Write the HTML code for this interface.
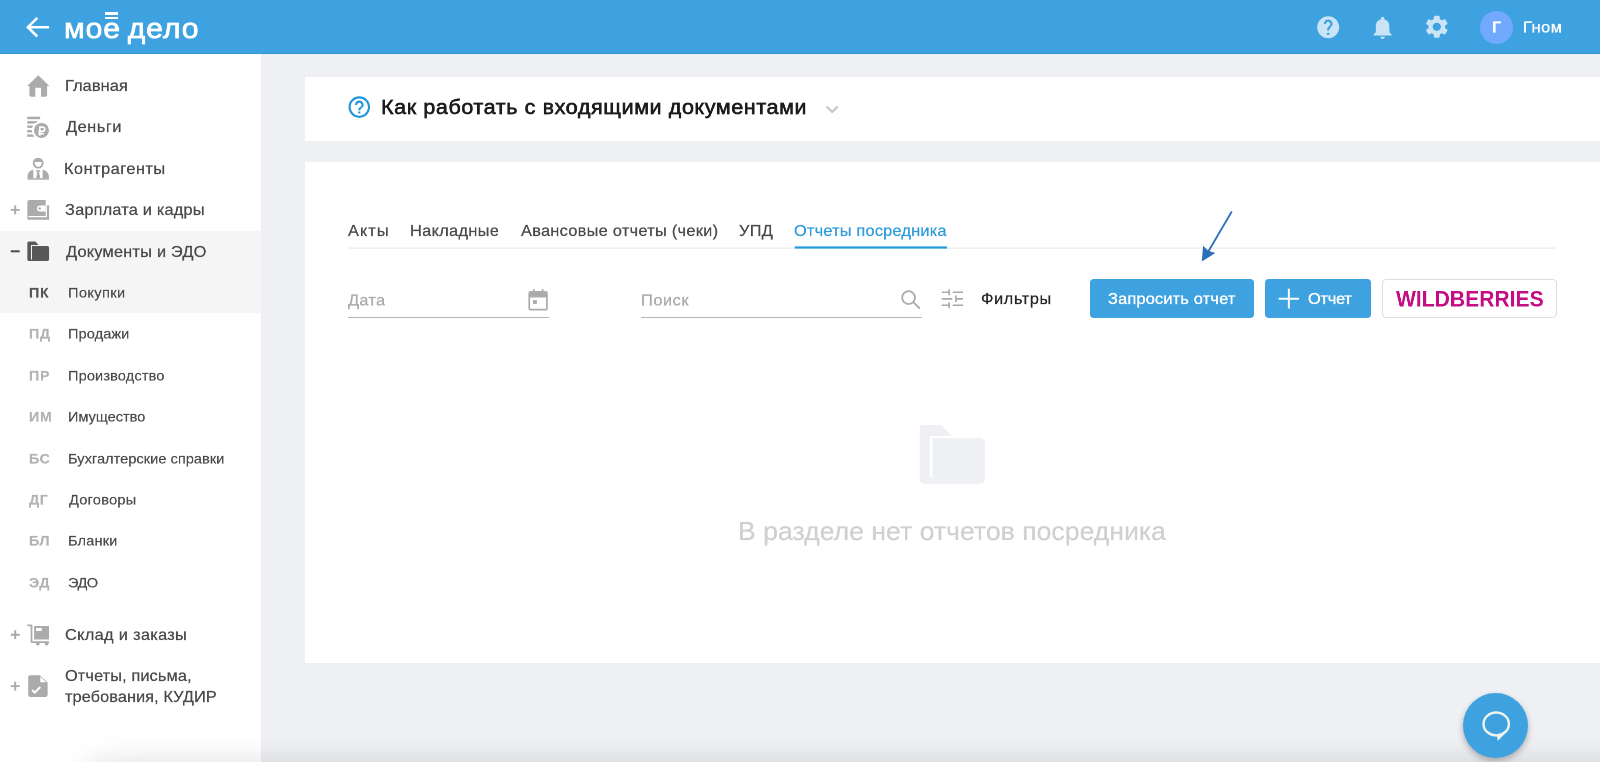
<!DOCTYPE html>
<html lang="ru">
<head>
<meta charset="utf-8">
<title>Моё дело — Покупки — Отчеты посредника</title>
<style>
*{box-sizing:border-box;margin:0;padding:0}
html,body{width:1600px;height:762px;overflow:hidden}
body{position:relative;background:#eef0f4;font-family:"Liberation Sans",sans-serif;color:#4a4a4a}
.abs{position:absolute}
.t{position:absolute;white-space:nowrap;line-height:40px;height:40px;font-size:32px;transform:scale(.51,.5);transform-origin:0 0;will-change:transform;-webkit-text-stroke:0.5px}
header{position:absolute;left:0;top:0;width:1600px;height:54px;background:#3da2df;box-shadow:inset 0 -1px 0 #3198d8}
header .logo{transform:scale(.527,.5);font-size:57px;line-height:80px;height:80px;color:#fff;-webkit-text-stroke:1.6px #fff}
header .user{color:#fff;font-size:32px;-webkit-text-stroke:0.7px #fff}
nav{position:absolute;left:0;top:54px;width:261px;height:708px;background:#fff}
nav .active{position:absolute;left:0;top:177px;width:261px;height:82px;background:#f5f5f5}
nav .m{font-size:32px;line-height:38px;color:#4a4a4a;-webkit-text-stroke:0.5px #4a4a4a}
nav .s{transform:scale(.52,.5);font-size:28px;color:#4a4a4a;-webkit-text-stroke:0.4px #4a4a4a}
nav .ab{font-size:28px;font-weight:bold;color:#b3b3b3;-webkit-text-stroke:0.3px;letter-spacing:1px}
.card{position:absolute;background:#fff}
.tab{font-size:32px;line-height:38px;color:#4a4a4a;-webkit-text-stroke:0.5px}
.btn{position:absolute;top:117px;height:39px;border-radius:4px;background:#3da2df;color:#fff}
.btn .t{font-size:32px;line-height:38px;-webkit-text-stroke:0.7px #fff}
</style>
</head>
<body>

<header>
  <svg class="abs" style="left:24px;top:14px" width="28" height="26" viewBox="24 14 28 26"><path d="M37.3 17.9 L27.9 27.2 L37.3 36.5 M28 27.2 H49.1" fill="none" stroke="#fff" stroke-width="2.6"/></svg>
  <span class="t logo" style="left:64px;top:8px;letter-spacing:1.84px;word-spacing:-4.8px">мое дело</span>
  <div class="abs" style="left:105.3px;top:12.4px;width:13.1px;height:2.3px;background:#fff"></div>
  <div class="abs" style="left:105.3px;top:16.9px;width:13.1px;height:2.3px;background:#fff"></div>
  <svg class="abs" style="left:1314.6px;top:13.9px" width="26.4" height="26.4" viewBox="0 0 24 24"><path fill="#cae4f7" d="M12 2C6.48 2 2 6.48 2 12s4.48 10 10 10 10-4.48 10-10S17.52 2 12 2zm1 17h-2v-2h2v2zm2.07-7.75l-.9.92C13.45 12.9 13 13.5 13 15h-2v-.5c0-1.1.45-2.1 1.17-2.83l1.24-1.26c.37-.36.59-.86.59-1.41 0-1.1-.9-2-2-2s-2 .9-2 2H8c0-2.21 1.79-4 4-4s4 1.79 4 4c0 .88-.36 1.68-.93 2.25z"/></svg>
  <svg class="abs" style="left:1368.6px;top:13.7px" width="27.2" height="27.2" viewBox="0 0 24 24"><path fill="#cae4f7" d="M12 22c1.1 0 2-.9 2-2h-4c0 1.1.89 2 2 2zm6-6v-5c0-3.07-1.64-5.64-4.5-6.32V4c0-.83-.67-1.5-1.5-1.5s-1.5.67-1.5 1.5v.68C7.63 5.36 6 7.92 6 11v5l-2 2v1h16v-1l-2-2z"/></svg>
  <svg class="abs" style="left:1422.8px;top:13.3px" width="27.6" height="27.6" viewBox="0 0 24 24"><path fill="#cae4f7" d="M19.14 12.94c.04-.3.06-.61.06-.94 0-.32-.02-.64-.07-.94l2.03-1.58c.18-.14.23-.41.12-.61l-1.92-3.32c-.12-.22-.37-.29-.59-.22l-2.39.96c-.5-.38-1.03-.7-1.62-.94l-.36-2.54c-.04-.24-.24-.41-.48-.41h-3.84c-.24 0-.43.17-.47.41l-.36 2.54c-.59.24-1.13.57-1.62.94l-2.39-.96c-.22-.08-.47 0-.59.22L2.74 8.870c-.12.21-.08.47.12.61l2.030 1.580c-.05.3-.09.63-.09.94s.02.64.07.94l-2.030 1.580c-.18.14-.23.41-.12.61l1.920 3.320c.12.22.37.29.59.22l2.390-.96c.5.38 1.030.7 1.620.94l.36 2.540c.05.24.24.41.48.41h3.840c.24 0 .44-.17.47-.41l.36-2.540c.59-.24 1.130-.56 1.620-.94l2.390.96c.22.08.47 0 .59-.22l1.920-3.320c.12-.22.07-.47-.12-.61l-2.010-1.580zM12 15.600c-1.980 0-3.600-1.620-3.600-3.600s1.620-3.600 3.600-3.600 3.600 1.620 3.600 3.600-1.620 3.600-3.600 3.600z"/></svg>
  <div class="abs" style="left:1480.2px;top:10.9px;width:32.7px;height:32.7px;border-radius:50%;background:#70a9fd"></div>
  <span class="t" style="left:1492px;top:17px;font-size:32px;font-weight:bold;color:#fff">Г</span>
  <span class="t user" style="left:1523px;top:17px;letter-spacing:1.12px">Гном</span>
</header>

<nav>
  <div class="active"></div>
  <span class="t m" style="left:65px;top:22px;letter-spacing:0.21px">Главная</span>
  <span class="t m" style="left:66px;top:63px;letter-spacing:1.04px">Деньги</span>
  <span class="t m" style="left:64px;top:105px;letter-spacing:0.98px">Контрагенты</span>
  <span class="t m" style="left:65px;top:146px;letter-spacing:0.38px">Зарплата и кадры</span>
  <span class="t m" style="left:66px;top:188px;letter-spacing:0.43px">Документы и ЭДО</span>
  <span class="t ab" style="left:29px;top:229px;color:#555">ПК</span><span class="t s" style="left:68px;top:229px;letter-spacing:0.78px">Покупки</span>
  <span class="t ab" style="left:29px;top:270px">ПД</span><span class="t s" style="left:68px;top:270px;letter-spacing:0.18px">Продажи</span>
  <span class="t ab" style="left:29px;top:312px">ПР</span><span class="t s" style="left:68px;top:312px;letter-spacing:0.26px">Производство</span>
  <span class="t ab" style="left:29px;top:353px">ИМ</span><span class="t s" style="left:68px;top:353px;letter-spacing:-0.05px">Имущество</span>
  <span class="t ab" style="left:29px;top:395px">БС</span><span class="t s" style="left:68px;top:395px;letter-spacing:0.07px">Бухгалтерские справки</span>
  <span class="t ab" style="left:29px;top:436px">ДГ</span><span class="t s" style="left:69px;top:436px;letter-spacing:0.47px">Договоры</span>
  <span class="t ab" style="left:29px;top:477px">БЛ</span><span class="t s" style="left:68px;top:477px;letter-spacing:0.31px">Бланки</span>
  <span class="t ab" style="left:29px;top:519px">ЭД</span><span class="t s" style="left:68px;top:519px;letter-spacing:-1.05px">ЭДО</span>
  <span class="t m" style="left:65px;top:571px;letter-spacing:0.64px">Склад и заказы</span>
  <span class="t m" style="left:65px;top:612px;letter-spacing:0.22px">Отчеты, письма,</span>
  <span class="t m" style="left:65px;top:633px;letter-spacing:0.15px">требования, КУДИР</span>
</nav>

<div class="card" style="left:305px;top:77px;width:1295px;height:63.600px">
  <span class="t" style="left:76px;top:18px;transform:scale(.525,.5);font-size:41px;font-weight:normal;-webkit-text-stroke:1.3px #1c1c1c;color:#1c1c1c;line-height:48px;height:48px;letter-spacing:1.14px">Как работать с входящими документами</span>
</div>

<div class="card" style="left:305px;top:162px;width:1295px;height:501px">
  <span class="t tab" style="left:43px;top:59px;letter-spacing:2.03px">Акты</span>
  <span class="t tab" style="left:105px;top:59px;letter-spacing:0.67px">Накладные</span>
  <span class="t tab" style="left:216px;top:59px;letter-spacing:0.58px">Авансовые отчеты (чеки)</span>
  <span class="t tab" style="left:434px;top:59px;letter-spacing:0.56px">УПД</span>
  <span class="t tab" style="left:489px;top:59px;color:#2f9bdc;letter-spacing:0.42px">Отчеты посредника</span>
    
  <span class="t" style="left:43px;top:128px;font-size:32px;color:#aaa;letter-spacing:0.63px">Дата</span>
  <div class="abs" style="left:43px;top:155px;width:201px;height:1px;background:#b5b5b5"></div>
  <span class="t" style="left:336px;top:128px;font-size:32px;color:#aaa;letter-spacing:1.15px">Поиск</span>
  <div class="abs" style="left:336px;top:155px;width:281px;height:1px;background:#b5b5b5"></div>
  <span class="t" style="left:676px;top:127px;font-size:32px;color:#262626;letter-spacing:1.19px;line-height:38px">Фильтры</span>

  <div class="btn" style="left:785px;width:164px"><span class="t" style="left:18px;top:10px;letter-spacing:0.41px">Запросить отчет</span></div>
  <div class="btn" style="left:960px;width:106px"><span class="t" style="left:43px;top:10px;letter-spacing:-0.40px">Отчет</span></div>
  <div class="btn" style="left:1077px;width:174.500px;background:#fff;border:1px solid #ddd"><span class="t" style="transform:scale(.468,.5);left:13px;top:8px;font-size:45px;font-weight:bold;color:#c40d83;line-height:44px;height:44px;-webkit-text-stroke:0;letter-spacing:0.04px">WILDBERRIES</span></div>

  <span class="t" style="left:433px;top:354px;font-size:52px;line-height:60px;height:60px;color:#d0d0d0;letter-spacing:0.12px">В разделе нет отчетов посредника</span>
</div>

<div class="abs" style="left:80px;top:764px;width:1600px;height:30px;border-radius:40px 0 0 0;box-shadow:0 0 28px 3px rgba(0,0,0,.12)"></div>
<div class="abs" style="left:1463px;top:692.500px;width:65px;height:65px;border-radius:50%;background:#3da2df;box-shadow:0 3px 6px rgba(0,0,0,.28)"></div>


<svg class="abs" style="left:0;top:0;pointer-events:none" width="1600" height="762" viewBox="0 0 1600 762">
  <!-- home -->
  <g fill="#ababab">
    <path d="M38.3 75.2 L49.3 85.9 H47.1 V95 a1.8 1.8 0 0 1 -1.8 1.8 H41 V87.8 H35.3 V96.8 H31.2 a1.8 1.8 0 0 1 -1.8 -1.8 V85.9 H27.2 Z"/>
  </g>
  <!-- coins -->
  <g fill="#ababab">
    <rect x="27.250" y="116.700" width="12.900" height="2.500"/>
    <rect x="27.250" y="121.100" width="10.500" height="2.500"/>
    <rect x="27.250" y="125.500" width="7" height="2.400"/>
    <rect x="27.250" y="130" width="6" height="2.400"/>
    <rect x="27.250" y="134.400" width="8" height="2.400"/>
    <circle cx="41.450" cy="130.400" r="9.600" fill="#fff"/>
    <circle cx="41.450" cy="130.400" r="7.500"/>
    <path d="M39.850 135.800 V127.100 H42.600 a2.150 2.150 0 0 1 0 4.300 H38.200 M38.200 133.700 H43.850" fill="none" stroke="#fff" stroke-width="1.600"/>
  </g>
  <!-- person -->
  <g fill="#ababab">
    <circle cx="38.2" cy="163.100" r="5.450"/>
    <path d="M34.500 162.100 H41.900 a3.700 4.800 0 0 1 -7.400 0 Z" fill="#fff"/>
    <path d="M27.500 178.500 V176.500 c0 -3.500 2.500 -6 5.800 -6.700 V178.500 Z"/>
    <path d="M48.900 178.500 V176.500 c0 -3.500 -2.800 -6 -6.300 -6.700 V178.500 Z"/>
    <rect x="27.500" y="178.200" width="21.400" height="1.500"/>
    <rect x="36.100" y="170.100" width="4.100" height="1.600"/>
    <path d="M37.300 171.600 H39 L40.200 178.300 H36.200 Z"/>
  </g>
  <!-- wallet -->
  <g fill="#ababab">
    <path d="M29.400 200 H45.700 V216 H27.350 V202 a2 2 0 0 1 2.050 -2 Z"/>
    <path d="M46.900 205.200 H49.100 V219.700 H28.400 a1.050 1.050 0 0 1 -1.050 -1.050 V215 H28.500 V217.300 H46.900 Z"/>
    <path d="M45.700 205.500 H40 a3 3 0 0 0 0 6 H45.700 Z" fill="#fff"/>
    <circle cx="39.700" cy="208.500" r="1.250"/>
  </g>
  <!-- folder dark -->
  <g fill="#585858">
    <path d="M28.800 241.400 H35.400 L38.600 245 H31 V259.400 H32 V261.100 H29.200 a1.850 1.850 0 0 1 -1.850 -1.850 V242.900 a1.500 1.500 0 0 1 1.450 -1.500 Z"/>
    <path d="M32 246 H47.300 a1.800 1.800 0 0 1 1.800 1.800 V259.300 a1.800 1.800 0 0 1 -1.800 1.800 H32 Z"/>
  </g>
  <!-- cart -->
  <g fill="#ababab">
    <path d="M27.300 624.400 H31.400 a1 1 0 0 1 1 1 V641.300 H49 V643.100 H31.600 a1 1 0 0 1 -1 -1 V626.200 H27.300 Z"/>
    <path d="M34.100 626 H49 V639.500 H34.100 Z M36.100 628 V631 H41.700 V628 Z" fill-rule="evenodd"/>
    <circle cx="37.800" cy="643.600" r="1.900"/><circle cx="46.700" cy="643.600" r="1.900"/>
  </g>
  <!-- doc check -->
  <g fill="#ababab">
    <path d="M30 675.200 H39.800 L47.650 682.600 V695.100 a1.800 1.800 0 0 1 -1.800 1.800 H30 a1.800 1.800 0 0 1 -1.800 -1.800 V677 a1.800 1.800 0 0 1 1.800 -1.800 Z"/>
    <path d="M40.300 676.600 V682.200 H46.200 Z" fill="#fff"/>
    <path d="M32.200 690 L34.700 692.600 L40.300 687" fill="none" stroke="#fff" stroke-width="2"/>
  </g>
  <!-- plus / minus -->
  <g stroke="#a8a8a8" stroke-width="1.900" fill="none">
    <path d="M10.800 209.900 H19.700 M15.250 205.500 V214.300"/>
    <path d="M10.800 634.700 H19.700 M15.250 630.300 V639.100"/>
    <path d="M10.800 686.100 H19.700 M15.250 681.700 V690.500"/>
  </g>
  <path d="M10.800 251.300 H19.700" stroke="#4a4a4a" stroke-width="2" fill="none"/>

  <!-- tab lines -->
  <rect x="348" y="247.500" width="1208" height="1.200" fill="#ebebeb"/>
  <rect x="794.800" y="246.400" width="152.100" height="2.200" fill="#1f98de"/>
  <!-- help outline -->
  <svg x="346.340" y="94.140" width="25.920" height="25.920" viewBox="0 0 24 24"><path fill="#1f98de" d="M11 18h2v-2h-2v2zm1-16C6.480 2 2 6.480 2 12s4.480 10 10 10 10-4.480 10-10S17.520 2 12 2zm0 18c-4.410 0-8-3.590-8-8s3.590-8 8-8 8 3.590 8 8-3.590 8-8 8zm0-14c-2.210 0-4 1.790-4 4h2c0-1.100.9-2 2-2s2 .9 2 2c0 2-3 1.750-3 5h2c0-2.250 3-2.500 3-5 0-2.210-1.790-4-4-4z"/></svg>
  <!-- chevron -->
  <path d="M826.600 106.400 L832.150 112 L837.700 106.400" fill="none" stroke="#c6c6c6" stroke-width="2.200"/>
  <!-- calendar -->
  <g fill="#ababab">
    <path fill-rule="evenodd" d="M530.400 291 H545.800 a2 2 0 0 1 2 2 V308.400 a2 2 0 0 1 -2 2 H530.400 a2 2 0 0 1 -2 -2 V293 a2 2 0 0 1 2 -2 Z M530.100 297.600 V308.700 H546.100 V297.600 Z"/>
    <rect x="533" y="289.200" width="1.800" height="3"/><rect x="541.700" y="289.200" width="1.800" height="3"/>
    <rect x="533" y="300.200" width="3.900" height="3.700"/>
  </g>
  <!-- search -->
  <g fill="none" stroke="#a9a9a9" stroke-width="1.800">
    <circle cx="908.600" cy="297.600" r="6.450"/>
    <path d="M913.400 302.400 L919.800 308.500"/>
  </g>
  <!-- filter sliders -->
  <g fill="none" stroke="#a9a9a9" stroke-width="1.600">
    <path d="M941.700 292.200 H948.400 M949.200 289.200 V295.200 M952.700 292.200 H963"/>
    <path d="M941.700 298.900 H952.200 M955.900 295.600 V301.900 M955.900 298.900 H963"/>
    <path d="M941.700 305.200 H948.400 M949.200 302.300 V308.300 M952.700 305.200 H963"/>
  </g>
  <!-- annotation arrow -->
  <path d="M1231.800 211.500 L1208 252" fill="none" stroke="#2c6fbb" stroke-width="1.800"/>
  <path d="M1201.800 261.500 L1203.100 245.700 L1208.300 250.800 L1215.300 253.100 Z" fill="#2c6fbb"/>
  <!-- plus in button -->
  <path d="M1278.700 298.700 H1299 M1288.850 288.800 V308.500" fill="none" stroke="#fff" stroke-width="2"/>
  <!-- empty folder -->
  <g fill="#eef0f4">
    <path d="M922.500 425 H941.500 L951.500 436 H930 V477.500 H932.500 V483.750 H924 a4.300 4.300 0 0 1 -4.300 -4.300 V428 a3 3 0 0 1 2.800 -3 Z"/>
    <path d="M932.500 438.200 H980 a5 5 0 0 1 5 5 V478.750 a5 5 0 0 1 -5 5 H932.500 Z"/>
  </g>
  <!-- chat bubble -->
  <ellipse cx="1496.200" cy="723.900" rx="12.700" ry="11.450" fill="none" stroke="#f4f2ee" stroke-width="2.400"/>
  <path d="M1496.800 735.500 L1497.900 740.800 L1506.500 732 Z" fill="#f4f2ee"/>
</svg>

</body>
</html>
